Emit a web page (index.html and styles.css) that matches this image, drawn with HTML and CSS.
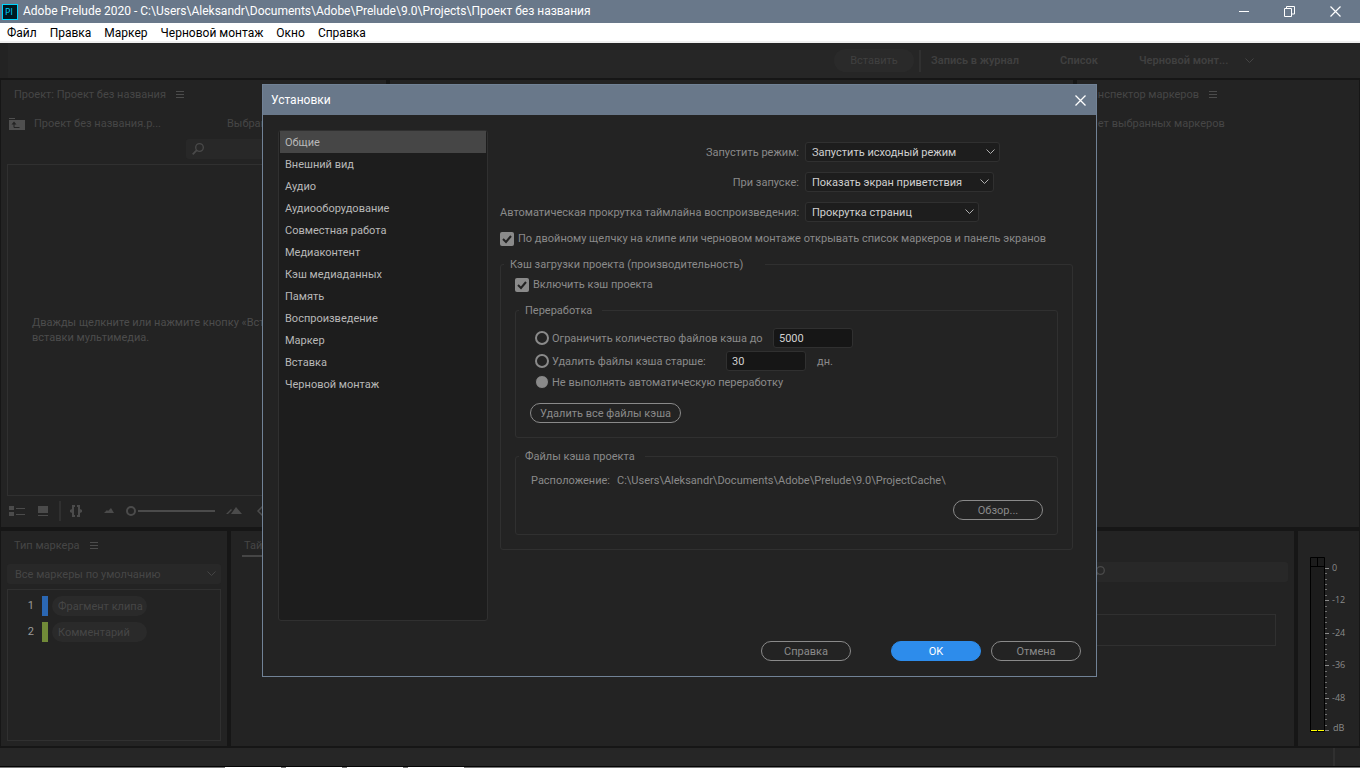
FILE: index.html
```html
<!DOCTYPE html>
<html lang="ru">
<head>
<meta charset="utf-8">
<title>Adobe Prelude 2020</title>
<link rel="stylesheet" href="styles.css">
</head>
<body>
<div class="app">
  <header class="titlebar">
    <svg class="logo" width="16" height="16" viewBox="0 0 16 16" aria-hidden="true">
      <rect x="0.5" y="0.5" width="15" height="15" fill="#001a22" stroke="#00d5ff"/>
      <text x="3" y="11" class="logo-text">Pl</text>
    </svg>
    <span class="titlebar-text">Adobe Prelude 2020 - C:\Users\Aleksandr\Documents\Adobe\Prelude\9.0\Projects\Проект без названия</span>
    <div class="window-buttons">
      <button type="button" aria-label="Свернуть"><svg width="11" height="11"><path d="M1 5.500h10" stroke="#fff"/></svg></button>
      <button type="button" aria-label="Развернуть"><svg width="11" height="11"><path d="M.5 2.500h7v8h-7zM2.500 2.500v-2h8v7.500h-2.500" fill="none" stroke="#fff"/></svg></button>
      <button type="button" aria-label="Закрыть"><svg width="11" height="11"><path d="M.5.5l10 10M10.500.5l-10 10" stroke="#fff" stroke-width="1.200"/></svg></button>
    </div>
  </header>
  <nav class="menu">
    <button type="button">Файл</button>
    <button type="button">Правка</button>
    <button type="button">Маркер</button>
    <button type="button">Черновой монтаж</button>
    <button type="button">Окно</button>
    <button type="button">Справка</button>
  </nav>
  <div class="toolbar">
    <button type="button" class="ingest">Вставить</button>
    <span class="toolbar-divider"></span>
    <button type="button" class="mode mode-log">Запись в журнал</button>
    <button type="button" class="mode mode-list">Список</button>
    <button type="button" class="mode mode-rough">Черновой монт... <svg width="9" height="6"><path d="M.5.5l4 4 4-4" fill="none" stroke="#444"/></svg></button>
  </div>

  <main class="workspace">
    <div class="row row-top">
      <section class="panel project">
        <div class="panel-title">Проект: Проект без названия
          <svg width="9" height="9"><path d="M0 1.500h8M0 4.500h8M0 7.500h8" stroke="#4c4c4c"/></svg>
        </div>
        <div class="project-path">
          <svg width="16" height="13"><path d="M0 1.500h6" stroke="#4f4f4f"/><path d="M0 3h16v10H0z" fill="#4f4f4f"/><path d="M10.500 10.500h-5.500V6" fill="none" stroke="#232323"/><path d="M2.500 7.500L5 4.500l2.500 3z" fill="#232323"/></svg>
          <span class="project-name">Проект без названия.p...</span>
          <span>Выбрано: 0</span>
        </div>
        <div class="project-search">
          <svg width="12" height="12"><circle cx="7.500" cy="4.500" r="3.800" fill="none" stroke="#4a4a4a" stroke-width="1.300"/><path d="M4.800 7.200L.7 11.300" stroke="#4a4a4a" stroke-width="1.800"/></svg>
          <input type="text" aria-label="Поиск в проекте">
        </div>
        <div class="project-empty">
          <p>Дважды щелкните или нажмите кнопку «Вставить» для<br>вставки мультимедиа.</p>
        </div>
        <div class="project-tools">
          <svg width="270" height="20" viewBox="0 0 270 20">
            <g fill="#4b4b4b">
              <path d="M1 5h5v4H1zM1 11h5v4H1zM8 7h9v1H8zM8 13h9v1H8z"/>
              <path d="M30 5h10v7H30zM30 14h10v1H30z"/>
              <path d="M51 0h2v20h-2z" fill="#303030"/>
              <path d="M62 9l2-1V4h3v2h-1v8h1v2h-3v-4l-2-1zM74 9l-2-1V4h-3v2h1v8h-1v2h3v-4l2-1z"/>
              <path d="M96 12l3-3 1 1 3-3 3 5z"/>
              <path d="M130 9h77v2h-77z"/>
              <path d="M218 13l5-5 1 1-4 4zM223 13l5-7 6 7z"/>
            </g>
            <circle cx="123" cy="10" r="4" fill="none" stroke="#4b4b4b" stroke-width="2"/>
            <path d="M255 5l-5 5 5 5" fill="none" stroke="#4b4b4b" stroke-width="1.500"/>
          </svg>
        </div>
      </section>
      <section class="panel"></section>
      <section class="panel inspector">
        <div class="panel-title">Инспектор маркеров
          <svg width="9" height="9"><path d="M0 1.500h8M0 4.500h8M0 7.500h8" stroke="#4c4c4c"/></svg>
        </div>
        <p class="inspector-note">Нет выбранных маркеров</p>
      </section>
    </div>

    <div class="row row-bottom">
      <section class="panel marker-types">
        <div class="panel-title">Тип маркера
          <svg width="9" height="9"><path d="M0 1.500h8M0 4.500h8M0 7.500h8" stroke="#4c4c4c"/></svg>
        </div>
        <div class="marker-filter">
          <select aria-label="Набор маркеров"><option>Все маркеры по умолчанию</option></select>
          <svg class="chevron" width="9" height="6"><path d="M.5.5l4 4 4-4" fill="none" stroke="#444"/></svg>
        </div>
        <ul class="marker-list">
          <li><span class="marker-key">1</span><span class="marker-color blue"></span><button type="button">Фрагмент клипа</button></li>
          <li><span class="marker-key">2</span><span class="marker-color green"></span><button type="button">Комментарий</button></li>
        </ul>
      </section>
      <section class="panel timeline">
        <div class="timeline-tab">Таймлайн</div>
        <div class="timeline-search">
          <svg width="12" height="12"><circle cx="7.500" cy="4.500" r="3.800" fill="none" stroke="#4a4a4a" stroke-width="1.300"/><path d="M4.800 7.200L.7 11.300" stroke="#4a4a4a" stroke-width="1.800"/></svg>
          <input type="text" aria-label="Поиск маркеров">
        </div>
        <div class="timeline-box"></div>
      </section>
      <section class="panel meter">
        <svg width="46" height="184" viewBox="0 0 46 184" role="img" aria-label="Уровень звука">
          <path d="M.5 5.500h14v174H.5z" fill="#1c1c1c" stroke="#000"/>
          <path d="M0 14.500h15M7.500 5v9" stroke="#000"/>
          <path d="M1 178.500h6M8 178.500h6" stroke="#ff0"/>
          <path d="M15 16.500h4M15 48.500h4M15 81.500h4M15 113.500h4M15 146.500h4M15 178.500h4" stroke="#8a8a8a"/>
          <path d="M15 21.500h2M15 27.500h2M15 32.500h2M15 37.500h2M15 43.500h2M15 54.500h2M15 59.500h2M15 65.500h2M15 70.500h2M15 76.500h2M15 86.500h2M15 92.500h2M15 97.500h2M15 102.500h2M15 108.500h2M15 119.500h2M15 124.500h2M15 130.500h2M15 135.500h2M15 141.500h2M15 151.500h2M15 157.500h2M15 162.500h2M15 167.500h2M15 173.500h2" stroke="#707070"/>
          <g class="meter-labels">
            <text x="22" y="19">0</text><text x="22" y="51">-12</text><text x="22" y="84">-24</text>
            <text x="22" y="116">-36</text><text x="22" y="149">-48</text><text x="23" y="179">dB</text>
          </g>
        </svg>
      </section>
    </div>
  </main>
  <footer class="status"><span class="status-divider"></span></footer>
  <div class="edge"><span></span><span></span><span></span><span></span></div>
</div>

<div class="overlay">
  <form class="dialog" role="dialog" aria-labelledby="dialog-title">
    <header class="dialog-header">
      <h1 id="dialog-title">Установки</h1>
      <button type="button" aria-label="Закрыть"><svg width="11" height="11"><path d="M.5.5l10 10M10.500.5l-10 10" stroke="#fff" stroke-width="1.300"/></svg></button>
    </header>
    <div class="dialog-body">
      <div class="categories">
        <button type="button" class="selected">Общие</button>
        <button type="button">Внешний вид</button>
        <button type="button">Аудио</button>
        <button type="button">Аудиооборудование</button>
        <button type="button">Совместная работа</button>
        <button type="button">Медиаконтент</button>
        <button type="button">Кэш медиаданных</button>
        <button type="button">Память</button>
        <button type="button">Воспроизведение</button>
        <button type="button">Маркер</button>
        <button type="button">Вставка</button>
        <button type="button">Черновой монтаж</button>
      </div>
      <div class="settings">
        <div class="selects">
          <label for="mode">Запустить режим:</label>
          <div class="select select-mode"><select id="mode"><option>Запустить исходный режим</option></select><svg class="chevron" width="9" height="6"><path d="M.5.5l4 4 4-4" fill="none" stroke="#b0b0b0"/></svg></div>
          <label for="startup">При запуске:</label>
          <div class="select select-startup"><select id="startup"><option>Показать экран приветствия</option></select><svg class="chevron" width="9" height="6"><path d="M.5.5l4 4 4-4" fill="none" stroke="#b0b0b0"/></svg></div>
          <label for="scroll">Автоматическая прокрутка таймлайна воспроизведения:</label>
          <div class="select select-scroll"><select id="scroll"><option>Прокрутка страниц</option></select><svg class="chevron" width="9" height="6"><path d="M.5.5l4 4 4-4" fill="none" stroke="#b0b0b0"/></svg></div>
        </div>
        <label class="check"><input type="checkbox" checked>По двойному щелчку на клипе или черновом монтаже открывать список маркеров и панель экранов</label>
        <fieldset class="cache">
          <legend>Кэш загрузки проекта (производительность)</legend>
          <label class="check"><input type="checkbox" checked>Включить кэш проекта</label>
          <fieldset class="cleanup">
            <legend>Переработка</legend>
            <div class="option option-count">
              <label><input type="radio" name="cleanup">Ограничить количество файлов кэша до</label>
              <input type="text" value="5000" aria-label="Количество файлов">
            </div>
            <div class="option option-age">
              <label><input type="radio" name="cleanup">Удалить файлы кэша старше:</label>
              <input type="text" value="30" aria-label="Количество дней">
              <span>дн.</span>
            </div>
            <div class="option option-never">
              <label><input type="radio" name="cleanup" checked>Не выполнять автоматическую переработку</label>
            </div>
            <button type="button" class="pill pill-clear">Удалить все файлы кэша</button>
          </fieldset>
          <fieldset class="files">
            <legend>Файлы кэша проекта</legend>
            <div class="location"><span>Расположение:</span><span>C:\Users\Aleksandr\Documents\Adobe\Prelude\9.0\ProjectCache\</span></div>
            <button type="button" class="pill pill-browse">Обзор...</button>
          </fieldset>
        </fieldset>
      </div>
    </div>
    <footer class="dialog-footer">
      <button type="button" class="pill pill-help">Справка</button>
      <button type="submit" class="pill pill-ok">OK</button>
      <button type="button" class="pill">Отмена</button>
    </footer>
  </form>
</div>
</body>
</html>
```
FILE: styles.css
```css
* { box-sizing: border-box; }
body {
  margin: 0;
  background: #161616;
  color: #464646;
  font: 11px/15px Roboto, "Noto Sans", sans-serif;
  overflow: hidden;
}
button, input, select {
  margin: 0;
  padding: 0;
  border: 0;
  background: none;
  color: inherit;
  font: inherit;
  outline: none;
}
select { appearance: none; }
p, h1, ul { margin: 0; padding: 0; }
svg { display: block; flex: none; }
span, label, button { white-space: nowrap; }

.app { display: flex; flex-direction: column; height: 100vh; }

.titlebar {
  display: flex;
  align-items: center;
  height: 23px;
  padding: 0 2px;
  gap: 5px;
  background: #69788a;
  color: #fff;
  font-size: 12px;
}
.logo-text { fill: #00d5ff; font: 9px "Open Sans", sans-serif; }
.window-buttons { display: flex; margin-left: auto; }
.window-buttons button { display: grid; place-items: center; width: 46px; height: 20px; }

.menu {
  display: flex;
  gap: 13px;
  height: 20px;
  padding: 2px 7px 0;
  background: #fff;
  border-bottom: 2px solid #f0f0f0;
  color: #000;
  font-size: 12px;
}

.toolbar {
  display: flex;
  align-items: center;
  justify-content: flex-end;
  height: 35px;
  padding-right: 106px;
  background: #262626;
  border-left: 8px solid #232323;
  color: #404040;
}
.ingest { width: 80px; height: 23px; border-radius: 12px; background: #2a2a2a; }
.toolbar-divider { width: 2px; height: 22px; margin: 0 10px 0 5px; background: #303030; }
.mode { display: flex; align-items: center; justify-content: space-between; font-weight: 600; text-align: left; }
.mode-log { width: 129px; }
.mode-list { width: 79px; }
.mode-rough { width: 115px; }

.workspace { display: flex; flex: 1; flex-direction: column; gap: 4px; min-height: 0; padding: 2px 1px; }
.row { display: grid; gap: 4px; min-height: 0; }
.row-top { flex: 447; grid-template-columns: 385fr 683fr 282fr; }
.row-bottom { flex: 215; grid-template-columns: 226px 1fr 61px; }
.panel { display: flex; flex-direction: column; min-width: 0; min-height: 0; background: #232323; }
.panel-title { display: flex; align-items: center; gap: 10px; height: 28px; padding-left: 13px; }

.project-path { display: flex; align-items: center; height: 30px; padding-left: 8px; }
.project-name { flex: none; width: 202px; padding-left: 9px; }
.project-search {
  display: flex;
  align-items: center;
  gap: 6px;
  height: 20px;
  margin: 1px 8px 5px 185px;
  padding-left: 6px;
  border-radius: 3px;
  background: #282828;
}
.project-search input, .timeline-search input { min-width: 0; flex: 1; }
.project-empty {
  display: flex;
  flex: 1;
  align-items: center;
  margin: 0 6px;
  padding-left: 24px;
  border: 1px solid #303030;
  color: #4c4c4c;
  white-space: nowrap;
}
.project-tools { height: 31px; padding: 5px 7px; overflow: hidden; }
.inspector-note { padding: 8px 13px; }

.marker-filter { position: relative; display: flex; margin: 5px 6px; height: 20px; border-radius: 3px; background: #282828; }
.marker-filter select { flex: 1; padding-left: 8px; color: #464646; }
.chevron { position: absolute; top: 7px; right: 5px; pointer-events: none; }
.marker-list {
  display: flex;
  flex: 1;
  flex-direction: column;
  gap: 6px;
  margin: 0 6px 5px;
  padding-top: 6px;
  border: 1px solid #303030;
  list-style: none;
}
.marker-list li { display: flex; gap: 4px; }
.marker-key { width: 30px; padding-right: 4px; color: #9a9a9a; line-height: 20px; text-align: right; }
.marker-color { width: 6px; height: 20px; }
.blue { background: #2b67b3; }
.green { background: #718a38; }
.marker-list button { width: 95px; height: 20px; padding-left: 6px; border-radius: 10px; background: #2a2a2a; text-align: left; }

.timeline-tab { align-self: flex-start; height: 26px; margin-left: 11px; padding: 7px 2px 2px; border-bottom: 2px solid #464646; }
.timeline-search {
  display: flex;
  align-items: center;
  align-self: flex-end;
  width: 200px;
  height: 20px;
  margin: 5px 6px 0 0;
  padding-left: 5px;
  border-radius: 3px;
  background: #282828;
}
.timeline-box { height: 32px; margin: 32px 18px 0 60px; border: 1px solid #303030; }
.meter { padding: 21px 0 0 12px; }
.meter-labels { fill: #8a8a8a; font: 9px "Open Sans", sans-serif; }

.status { display: flex; justify-content: flex-end; height: 18px; padding-right: 25px; background: #262626; }
.status-divider { width: 2px; background: #303030; }
.edge { display: flex; gap: 5px; height: 2px; padding-left: 225px; border-top: 1px solid #050505; background: #777; }
.edge span { width: 56px; background: #fff; }

/* Preferences dialog */
.overlay { position: fixed; inset: 0; display: flex; justify-content: center; align-items: flex-start; padding: 84px 1px 0 0; }
.dialog { width: 835px; border: 1px solid #718296; background: #232323; color: #8a8a8a; }
.dialog-header {
  display: flex;
  align-items: center;
  justify-content: space-between;
  height: 30px;
  padding: 0 10px 0 8px;
  background: #69788a;
  color: #fff;
}
.dialog-header h1 { font-size: 12px; font-weight: 400; }
.dialog-body { display: flex; gap: 12px; padding: 15px 23px 0 15px; }
.categories {
  display: flex;
  flex-direction: column;
  width: 210px;
  height: 491px;
  padding: 0 1px;
  border: 1px solid #303030;
  border-radius: 3px;
  background: #1d1d1d;
  color: #b8b8b8;
}
.categories button { height: 22px; padding: 0 5px; text-align: left; }
.categories .selected { background: #464646; }
.settings { flex: 1; padding-top: 12px; }
.selects { display: grid; grid-template-columns: 299px max-content; gap: 10px 6px; align-items: center; }
.selects label { text-align: right; }
.select { position: relative; display: flex; height: 20px; border: 1px solid #303030; border-radius: 3px; background: #1d1d1d; color: #d0d0d0; }
.select select { flex: 1; padding: 1px 0 0 6px; }
.select .chevron { top: 6px; right: 4px; }
.select-mode { width: 195px; }
.select-startup { width: 189px; }
.select-scroll { width: 174px; }

.check { display: flex; align-items: center; gap: 4px; height: 14px; line-height: 16px; }
.settings > .check { margin-top: 10px; }
.check input {
  flex: none;
  appearance: none;
  width: 14px;
  height: 14px;
  border-radius: 2px;
  background: #8a8a8a url("data:image/svg+xml,%3Csvg xmlns='http://www.w3.org/2000/svg' width='14' height='14'%3E%3Cpath d='M3 7l3 3 5-6' fill='none' stroke='%23232323' stroke-width='2'/%3E%3C/svg%3E");
}
fieldset { min-width: 0; margin: 0; padding: 0; border: 1px solid #303030; border-radius: 3px; }
legend { height: 14px; margin-left: 3px; padding: 0 22px 0 6px; }
.cache { margin-top: 11px; padding: 0 14px 14px; }
.cache > legend { margin-left: -11px; }
.cache > .check { margin-top: 7px; }
.cleanup, .files { padding: 0 14px 14px; }
.cleanup > legend, .files > legend { margin-left: -11px; padding-right: 10px; }
.cache .cleanup { margin-top: 11px; }
.cache .files { margin-top: 11px; }
.option { display: flex; align-items: center; height: 20px; }
.option-count { margin: 11px 0 3px; }
.option-never { margin-top: 1px; }
.option label { display: flex; align-items: center; gap: 3px; padding-left: 5px; }
.option input[type="radio"] { appearance: none; width: 14px; height: 14px; border: 2px solid #8a8a8a; border-radius: 7px; }
.option input[type="radio"]:checked { border: 1px solid #232323; background: #8a8a8a; }
.option input[type="text"] { width: 80px; height: 20px; padding: 0 0 0 5px; border: 1px solid #303030; border-radius: 3px; background: #161616; color: #d0d0d0; }
.option-count label { width: 243px; }
.option-age label { width: 196px; }
.option-age span { padding-left: 11px; }
.pill { width: 90px; height: 20px; border: 1px solid #8a8a8a; border-radius: 10px; }
.pill-clear { width: 151px; margin-top: 11px; }
.location { display: flex; gap: 7px; height: 14px; padding-left: 1px; }
.cache .location { margin-top: 10px; }
.pill-browse { display: block; margin: 13px 0 0 auto; }
.dialog-footer { display: flex; justify-content: flex-end; gap: 10px; padding: 20px 15px 15px; }
.pill-help { margin-right: 30px; }
.pill-ok { border-color: #2d8ceb; background: #2d8ceb; color: #fff; }
```
